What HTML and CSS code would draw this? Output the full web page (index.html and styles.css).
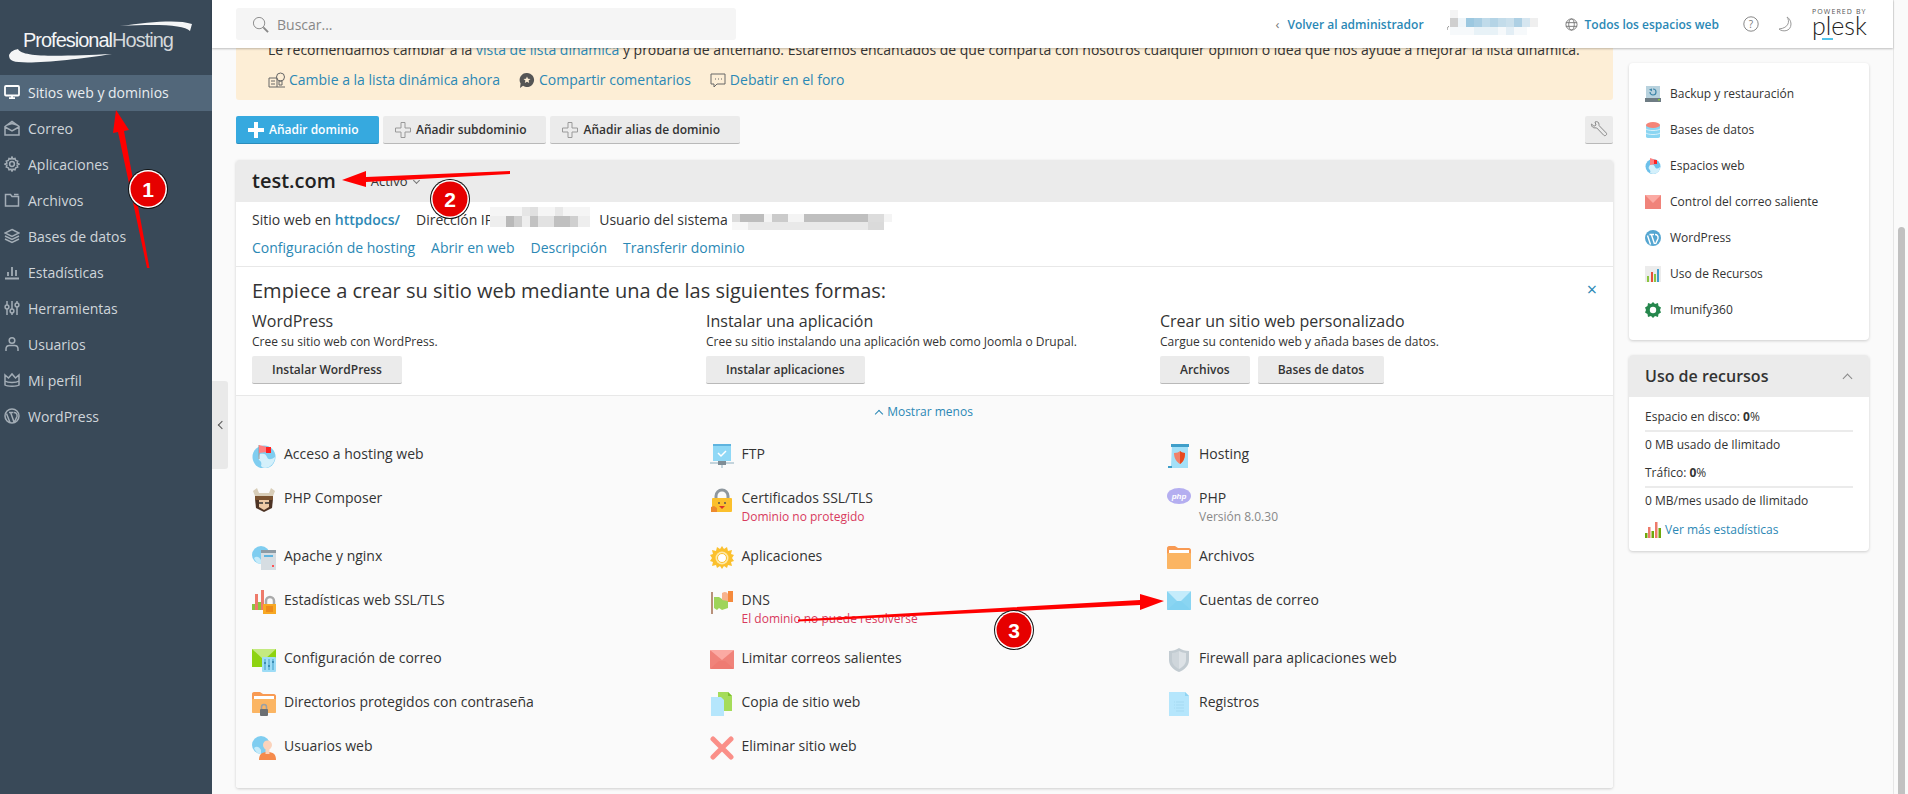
FILE: index.html
```html
<!DOCTYPE html>
<html lang="es">
<head>
  <meta charset="UTF-8" />
  <title>Sitios web y dominios</title>
  <link rel="stylesheet" href="styles.css">
</head>
<body>
  <div class="app">
    <aside class="sidebar">
      <div class="logo">
        <svg viewBox="0 0 212 75" width="212" height="75">
          <path d="M120 26C150 22 178 19 192 24L190 31C184 25 160 24 120 26Z" fill="#f4f5f6"/>
          <path d="M9 55C11 51 14 50 18 49C22 58 62 56 112 54C74 60 24 65 13 61C10 60 9 58 9 55Z" fill="#f4f5f6"/>
          <text x="23" y="47" class="logo-text">Profesional<tspan class="logo-dim">Hosting</tspan></text>
        </svg>
      </div>
      <nav class="menu">
        <a class="menu-item active">
          <svg viewBox="0 0 16 16"><rect x="1" y="2" width="14" height="9.5" rx="1" fill="none" stroke-width="1.8"/><path d="M5 14.2h6M8 12v2" stroke-width="1.8"/></svg>
          Sitios web y dominios
        </a>
        <a class="menu-item">
          <svg viewBox="0 0 16 16"><path d="M1 6.500L8 1.500l7 5V15H1zM1 7l7 4 7-4M3 5l5-1.500L13 5" fill="none"/></svg>
          Correo
        </a>
        <a class="menu-item">
          <svg viewBox="0 0 16 16"><circle cx="8" cy="8" r="2.400" fill="none"/><path d="M8 1l1 2 2-.6.7 2 2 .7-.6 2 1.900 1-1.900 1 .6 2-2 .7-.7 2-2-.6-1 1.900-1-1.900-2 .6-.7-2-2-.7.6-2L1 8.100l1.900-1-.6-2 2-.7.7-2 2 .6z" fill="none"/></svg>
          Aplicaciones
        </a>
        <a class="menu-item">
          <svg viewBox="0 0 16 16"><path d="M1.500 2.500h5l1.500 2h6.500v9.500h-13zM10 2.500h4.500" fill="none"/></svg>
          Archivos
        </a>
        <a class="menu-item">
          <svg viewBox="0 0 16 16"><path d="M8 1.500l7 3.500-7 3.500L1 5zM1 8l7 3.500L15 8M1 11l7 3.500 7-3.500" fill="none"/></svg>
          Bases de datos
        </a>
        <a class="menu-item">
          <svg viewBox="0 0 16 16"><path d="M1 14.500h14M4 12V8M8 12V3M12 12V6" fill="none" stroke-width="1.800"/></svg>
          Estadísticas
        </a>
        <a class="menu-item">
          <svg viewBox="0 0 16 16"><path d="M3 1v4M3 9v6M8 1v8M8 13v2M13 1v2M13 7v8" fill="none"/><circle cx="3" cy="7" r="1.900" fill="none"/><circle cx="8" cy="11" r="1.900" fill="none"/><circle cx="13" cy="5" r="1.900" fill="none"/></svg>
          Herramientas
        </a>
        <a class="menu-item">
          <svg viewBox="0 0 16 16"><circle cx="8" cy="4.500" r="2.800" fill="none"/><path d="M2 15v-2c0-2.500 2-3.500 3.500-3.500h5c1.500 0 3.500 1 3.500 3.500v2" fill="none"/></svg>
          Usuarios
        </a>
        <a class="menu-item">
          <svg viewBox="0 0 16 16"><path d="M1 3l3.500 3L8 2l3.500 4L15 3v10c-2 1.500-12 1.500-14 0zM1 9c3 2 11 2 14 0" fill="none"/></svg>
          Mi perfil
        </a>
        <a class="menu-item">
          <svg viewBox="0 0 16 16"><circle cx="8" cy="8" r="7" fill="none"/><path d="M2.500 5.500l3.500 9M5 4.500h4.500M6.800 5l3.200 9M10 4.500c2 0 3.500 1.500 3 4l-2.500 5.500" fill="none" stroke-width="1.500"/></svg>
          WordPress
        </a>
      </nav>
    </aside>

    <div class="page">
      <header class="topbar">
        <div class="search">
          <svg viewBox="0 0 18 18" width="17" height="17" class="search-icon"><circle cx="7.500" cy="7.500" r="6"/><path d="M12 12l5 5" stroke-width="2"/></svg>
          Buscar...
        </div>
        <div class="top-right">
          <span class="back-chevron">‹</span>
          <a class="top-link back-link">Volver al administrador</a>
          <svg class="user-mosaic" width="92" height="32" viewBox="0 0 92 32">
            <path d="M0 22c0-2 1-3 2-4" stroke="#888" fill="none"/>
            <rect x="3" y="2" width="8" height="8" fill="#f4f4f4"/>
            <rect x="3" y="10" width="8" height="9" fill="#cfcfcf"/>
            <rect x="11" y="10" width="8" height="9" fill="#eef5f9"/>
            <rect x="19" y="10" width="8" height="9" fill="#9cc8e0"/>
            <rect x="27" y="10" width="8" height="9" fill="#a9cee3"/>
            <rect x="35" y="10" width="8" height="9" fill="#c0dbea"/>
            <rect x="43" y="10" width="8" height="9" fill="#b4d4e6"/>
            <rect x="51" y="10" width="8" height="9" fill="#c3dcea"/>
            <rect x="59" y="10" width="8" height="9" fill="#cbe0ec"/>
            <rect x="67" y="10" width="8" height="9" fill="#aed0e4"/>
            <rect x="75" y="10" width="8" height="9" fill="#d6e6f0"/>
            <rect x="83" y="10" width="8" height="9" fill="#efefef"/>
            <rect x="3" y="19" width="77" height="8" fill="#f6f9fb"/>
            <rect x="27" y="19" width="24" height="8" fill="#e8f2f7"/>
            <rect x="59" y="19" width="8" height="8" fill="#e3eef5"/>
          </svg>
          <svg class="globe-icon" viewBox="0 0 14 14" width="13" height="13"><circle cx="7" cy="7" r="6"/><ellipse cx="7" cy="7" rx="3" ry="6"/><path d="M1 5h12M1 9h12"/></svg>
          <a class="top-link">Todos los espacios web</a>
          <svg class="help-icon" viewBox="0 0 16 16" width="16" height="16"><circle cx="8" cy="8" r="7.200"/><text x="8" y="11.500" class="help-mark">?</text></svg>
          <svg class="moon-icon" viewBox="0 0 16 16" width="16" height="16"><path d="M10 1c3 4 2 11-8 12 3 3 12 3 12-5 0-3-2-6-4-7z"/></svg>
          <div class="plesk">
            <span class="plesk-by">POWERED BY</span>
            <span class="plesk-name">plesk</span>
            <span class="plesk-bar"></span>
          </div>
        </div>
      </header>

      <div class="body-row">
        <main class="content">
          <section class="notice">
            <p class="notice-text">Le recomendamos cambiar a la <a>vista de lista dinámica</a> y probarla de antemano. Estaremos encantados de que comparta con nosotros cualquier opinión o idea que nos ayude a mejorar la lista dinámica.</p>
            <div class="notice-links">
              <a>
                <svg viewBox="0 0 18 18" width="18" height="18"><path d="M1 7h8v9H1zM3 10h4M3 13h4" fill="none" stroke="#666"/><circle cx="12.500" cy="6" r="4" fill="none" stroke="#666"/><path d="M11 10h3v4h-3zM9 16h8" fill="none" stroke="#666"/></svg>
                Cambie a la lista dinámica ahora
              </a>
              <a>
                <svg viewBox="0 0 18 18" width="18" height="18"><path d="M9 2a7 7 0 1 1-4 12.700L2 17l.6-4.500A7 7 0 0 1 9 2z" fill="#555"/><path d="M9 5.500l1 2.300 2.500.2-1.900 1.600.6 2.400L9 10.700 6.800 12l.6-2.400L5.500 8l2.500-.2z" fill="#fdeed6"/></svg>
                Compartir comentarios
              </a>
              <a>
                <svg viewBox="0 0 18 18" width="18" height="18"><path d="M2 3h14v10H8l-3 3v-3H2z" fill="none" stroke="#666"/><path d="M6 8h1M9 8h1M12 8h1" stroke="#666"/></svg>
                Debatir en el foro
              </a>
            </div>
          </section>

          <div class="toolbar">
            <button class="btn btn-primary">
              <svg viewBox="0 0 16 16" width="16" height="16"><path d="M6 0h4v6h6v4h-6v6H6v-6H0V6h6z" fill="#fff"/></svg>
              Añadir dominio
            </button>
            <button class="btn">
              <svg viewBox="0 0 16 16" width="16" height="16"><path d="M6 .5h4v5.500h5.500v4H10v5.500H6V10H.5V6H6z" fill="none" stroke="#999"/></svg>
              Añadir subdominio
            </button>
            <button class="btn">
              <svg viewBox="0 0 16 16" width="16" height="16"><path d="M6 .5h4v5.500h5.500v4H10v5.500H6V10H.5V6H6z" fill="none" stroke="#999"/></svg>
              Añadir alias de dominio
            </button>
            <button class="btn btn-tool">
              <svg viewBox="0 0 18 18" width="18" height="18"><path d="M5 1c2-1 4 0 4 2.500 0 .7 0 1 .3 1.300l7 7.200c1.200 1.500-1 3.500-2.500 2.300L6.800 7C6 6.500 4 7.500 2.500 6 1.500 5 1.300 4 1.500 3l2.500 2.300L6 4z" fill="none" stroke="#888"/></svg>
            </button>
          </div>

          <section class="card">
            <div class="card-head">
              <h2 class="domain">test.com</h2>
              <span class="status-dot"></span>
              <span class="status">Activo</span>
              <span class="status-chevron"></span>
            </div>
            <div class="info">
              <div class="info-row">
                <span>Sitio web en <a class="strong-link">httpdocs/</a></span>
                <span class="ip"><span>Dirección IP</span>
                  <svg class="mosaic" width="101" height="20" viewBox="0 0 101 20">
                    <rect width="100" height="9" fill="#f5f5f5"/>
                    <rect x="32" width="8" height="9" fill="#e6e6e6"/>
                    <rect x="40" width="8" height="9" fill="#e0e0e0"/>
                    <rect x="65" width="8" height="9" fill="#e8e8e8"/>
                    <rect y="9" width="100" height="11" fill="#eee"/>
                    <rect x="16" y="9" width="8" height="11" fill="#b9b9b9"/>
                    <rect x="24" y="9" width="8" height="11" fill="#cfcfcf"/>
                    <rect x="40" y="9" width="8" height="11" fill="#c2c2c2"/>
                    <rect x="48" y="9" width="16" height="11" fill="#e2e2e2"/>
                    <rect x="64" y="9" width="16" height="11" fill="#c0c0c0"/>
                    <rect x="80" y="9" width="8" height="11" fill="#cfcfcf"/>
                  </svg>
                </span>
                <span class="sys-user"><span>Usuario del sistema</span>
                  <svg class="mosaic" width="160" height="16" viewBox="0 0 160 16">
                    <rect width="160" height="8" fill="#dcdcdc"/>
                    <rect x="8" width="24" height="8" fill="#bdbdbd"/>
                    <rect x="32" width="8" height="8" fill="#f4f4f4"/>
                    <rect x="40" width="16" height="8" fill="#cbcbcb"/>
                    <rect x="56" width="16" height="8" fill="#f4f4f4"/>
                    <rect x="72" width="64" height="8" fill="#bfbfbf"/>
                    <rect x="152" width="8" height="8" fill="#f4f4f4"/>
                    <rect y="8" width="152" height="8" fill="#e9e9e9"/>
                    <rect y="8" width="16" height="8" fill="#f7f7f7"/>
                    <rect x="136" y="8" width="16" height="8" fill="#dadada"/>
                  </svg>
                </span>
              </div>
              <div class="info-links">
                <a>Configuración de hosting</a>
                <a>Abrir en web</a>
                <a>Descripción</a>
                <a>Transferir dominio</a>
              </div>
            </div>

            <div class="welcome">
              <a class="welcome-close">×</a>
              <h3 class="welcome-title">Empiece a crear su sitio web mediante una de las siguientes formas:</h3>
              <div class="welcome-cols">
                <div class="welcome-col">
                  <h4>WordPress</h4>
                  <p>Cree su sitio web con WordPress.</p>
                  <button class="btn btn-wide">Instalar WordPress</button>
                </div>
                <div class="welcome-col">
                  <h4>Instalar una aplicación</h4>
                  <p>Cree su sitio instalando una aplicación web como Joomla o Drupal.</p>
                  <button class="btn btn-wide">Instalar aplicaciones</button>
                </div>
                <div class="welcome-col">
                  <h4>Crear un sitio web personalizado</h4>
                  <p>Cargue su contenido web y añada bases de datos.</p>
                  <div class="btn-row">
                    <button class="btn btn-wide">Archivos</button>
                    <button class="btn btn-wide">Bases de datos</button>
                  </div>
                </div>
              </div>
            </div>

            <div class="tools">
              <a class="show-less"><span class="up-chevron"></span>Mostrar menos</a>
              <div class="tool-grid">
                <div class="tool">
                  <svg viewBox="0 0 24 24"><circle cx="12" cy="13" r="11.500" fill="#7fcdf0"/><path d="M8 10c4-1 6 0 7 3s4 3 8 0c0 6-5 11-10 11-2 0-3-1-4-2 1-3 0-5-2-6-1-2 0-5 1-6z" fill="#d4f0fb"/><path d="M7 1v14" stroke="#999"/><path d="M7 1l8 2v5l-8 1z" fill="#ff8080"/><rect x="14" y="3" width="5" height="6" fill="#f22"/></svg>
                  <div class="tool-text">Acceso a hosting web</div>
                </div>
                <div class="tool">
                  <svg viewBox="0 0 24 24"><path d="M3 8L1 3l4-3 2 5h10l2-5 4 3-2 5-3 3H6z" fill="#d8cdb8"/><path d="M3 11h18l-1 9-8 4-8-4z" fill="#4d3324"/><rect x="3" y="8" width="18" height="4" fill="#7a5230"/><path d="M7 12h10v7l-5 3-5-3z" fill="#ecc9a5"/><path d="M7 15h4M13 15h4" stroke="#333" stroke-width="1.500"/></svg>
                  <div class="tool-text">PHP Composer</div>
                </div>
                <div class="tool">
                  <svg viewBox="0 0 24 24"><circle cx="9" cy="9" r="9" fill="#7fcdf0"/><path d="M2 12c3-3 6 0 7 2v4c-3 0-6-3-7-6z" fill="#c5ebfa"/><rect x="9" y="4" width="15" height="20" fill="#d6dde2"/><rect x="9" y="4" width="15" height="3" fill="#8e9aa3"/><rect x="12" y="9" width="9" height="2" fill="#5fb4df"/><rect x="20" y="19" width="2" height="2" fill="#f55"/></svg>
                  <div class="tool-text">Apache y nginx</div>
                </div>
                <div class="tool">
                  <svg viewBox="0 0 24 24"><rect y="14" width="3" height="6" fill="#8cc63f"/><rect x="3" y="4" width="3" height="16" fill="#ee7a6a"/><rect x="6" y="12" width="3" height="8" fill="#8cc63f"/><rect x="9" y="0" width="3" height="20" fill="#ee7a6a"/><path d="M14 15v-4a4 4 0 0 1 8 0v4" fill="none" stroke="#aaa" stroke-width="2.500"/><rect x="11" y="14" width="13" height="10" fill="#f7a823"/><path d="M14 17h7M14 19h7M14 21h7" stroke="#e36f12"/></svg>
                  <div class="tool-text">Estadísticas web SSL/TLS</div>
                </div>
                <div class="tool">
                  <svg viewBox="0 0 24 24"><rect y="1" width="24" height="18" fill="#8ed311"/><path d="M0 1h24L12 12z" fill="#c4ea80"/><rect x="10" y="9" width="14" height="15" rx="1" fill="#9ddcf6"/><path d="M13 11v11M17 11v11M21 11v11" stroke="#3f9ec9"/><path d="M12 15h2M16 18h2M20 14h2" stroke="#2e7ea5" stroke-width="1.500"/></svg>
                  <div class="tool-text">Configuración de correo</div>
                </div>
                <div class="tool">
                  <svg viewBox="0 0 24 24"><path d="M0 2c0-1 .5-2 2-2h6l3 2h11c1 0 2 1 2 2v15c0 1-1 2-2 2H2c-1 0-2-1-2-2z" fill="#f89a53"/><rect x="2" y="4" width="20" height="3" fill="#fff"/><rect y="7" width="24" height="14" rx="1" fill="#fbb563"/><path d="M9.500 18v-3a2.500 2.500 0 0 1 5 0v3" fill="none" stroke="#9aa0a6" stroke-width="1.500"/><rect x="8" y="17" width="8" height="7" rx="1" fill="#6b6f73"/></svg>
                  <div class="tool-text">Directorios protegidos con contraseña</div>
                </div>
                <div class="tool">
                  <svg viewBox="0 0 24 24"><circle cx="9" cy="9" r="9" fill="#7fcdf0"/><path d="M2 12c3-3 6 0 7 2v4c-3 0-6-3-7-6z" fill="#c5ebfa"/><circle cx="15.500" cy="9" r="4.500" fill="#fbd3bc"/><path d="M7 24c0-6 3-8 8.500-8s8.500 2 8.500 8z" fill="#f58a4b"/><rect x="13.500" y="12" width="4" height="6" fill="#fbd3bc"/></svg>
                  <div class="tool-text">Usuarios web</div>
                </div>

                <div class="tool">
                  <svg viewBox="0 0 24 24"><rect x="3" y="0" width="18" height="3" fill="#5fb4df"/><rect x="3" y="2" width="18" height="15" fill="#8fd8f6"/><path d="M8 9l3 3 5-5" fill="none" stroke="#fff" stroke-width="1.500"/><rect y="18" width="24" height="2" fill="#c4d4dc"/><rect x="8" y="17" width="8" height="4" fill="#7f8d96"/><rect x="11" y="21" width="2" height="3" fill="#c4d4dc"/></svg>
                  <div class="tool-text">FTP</div>
                </div>
                <div class="tool">
                  <svg viewBox="0 0 24 24"><path d="M6 11V8a6 6 0 0 1 12 0v3" fill="none" stroke="#8e979e" stroke-width="3"/><rect x="2" y="10" width="20" height="14" rx="1" fill="#fbc02d"/><circle cx="9" cy="15" r="1" fill="#555"/><circle cx="15" cy="15" r="1" fill="#555"/><path d="M9 18h6l-3 3z" fill="#d9352b"/><path d="M1 24v-5l3-1 3 2v4z" fill="#ed8a2f"/></svg>
                  <div class="tool-text">Certificados SSL/TLS<span class="tool-sub danger">Dominio no protegido</span></div>
                </div>
                <div class="tool">
                  <svg viewBox="0 0 24 24"><path d="M12 0l2 3 3-2 1 4 4-1-1 4 3 1-2 3 2 3-3 1 1 4-4-1-1 3-3-2-2 3-2-3-3 2-1-3-4 1 1-4-3-1 2-3-2-3 3-1-1-4 4 1 1-4 3 2z" fill="#fbc02d"/><circle cx="12" cy="12" r="6.500" fill="#ffe9a8"/><circle cx="12" cy="12" r="4.500" fill="#fff" stroke="#fbc02d"/></svg>
                  <div class="tool-text">Aplicaciones</div>
                </div>
                <div class="tool">
                  <svg viewBox="0 0 24 24"><rect x="1" y="2" width="2" height="22" fill="#b8917a"/><path d="M4 7h5l3 2 6-2v11l-6 2-3-2-2 2-3-2z" fill="#9ed45a"/><path d="M12 3c3-2 5-1 6 1v7l-6-1z" fill="#f7b28d"/><rect x="18" y="1" width="5" height="11" fill="#f58a3c"/></svg>
                  <div class="tool-text">DNS<span class="tool-sub danger">El dominio no puede resolverse</span></div>
                </div>
                <div class="tool">
                  <svg viewBox="0 0 24 24"><rect y="2" width="24" height="19" rx="1" fill="#f0837a"/><path d="M0 2h24L12 12z" fill="#fbaaa3"/><path d="M0 21l9-8h6l9 8z" fill="#ee7b72"/></svg>
                  <div class="tool-text">Limitar correos salientes</div>
                </div>
                <div class="tool">
                  <svg viewBox="0 0 24 24"><path d="M8 0h10l4 4v15H8z" fill="#a5dc5a"/><path d="M18 0l4 4h-4z" fill="#7cc12c"/><path d="M1 5h10l3 3v16H1z" fill="#b5e6fc"/></svg>
                  <div class="tool-text">Copia de sitio web</div>
                </div>
                <div class="tool">
                  <svg viewBox="0 0 24 24"><path d="M3 3l18 18M21 3L3 21" stroke="#fa8f88" stroke-width="5" stroke-linecap="round"/></svg>
                  <div class="tool-text">Eliminar sitio web</div>
                </div>

                <div class="tool">
                  <svg viewBox="0 0 24 24"><path d="M5 0h16v24H1v-1l3-1z" fill="#a3e0f8"/><rect x="4" y="0" width="18" height="3" fill="#3f9ec9"/><path d="M1 22h4v2H1z" fill="#3f9ec9"/><path d="M7 9c3 0 5-1 6-2 1 1 3 2 5 2 0 6-2 9-5 11-3-2-6-5-6-11z" fill="#f0806a"/><path d="M13 7c1 1 3 2 5 2 0 6-2 9-5 11z" fill="#e8491f"/></svg>
                  <div class="tool-text">Hosting</div>
                </div>
                <div class="tool">
                  <svg viewBox="0 0 24 16" class="php-icon"><ellipse cx="12" cy="8" rx="12" ry="8" fill="#b4aef0"/><text x="12" y="11" class="php-mark">php</text></svg>
                  <div class="tool-text">PHP<span class="tool-sub">Versión 8.0.30</span></div>
                </div>
                <div class="tool">
                  <svg viewBox="0 0 24 24"><path d="M0 2c0-1 1-2 2-2h6l3 2h11c1 0 2 1 2 2v17c0 1-1 2-2 2H2c-1 0-2-1-2-2z" fill="#f89a53"/><rect x="2" y="4" width="20" height="3" fill="#fff"/><rect y="7" width="24" height="16" rx="1" fill="#fbb563"/></svg>
                  <div class="tool-text">Archivos</div>
                </div>
                <div class="tool">
                  <svg viewBox="0 0 24 24"><rect y="1" width="24" height="19" rx="1" fill="#8ad5f2"/><path d="M0 1h24L14 11h-4z" fill="#c5ecfb"/><path d="M0 20l10-9h4l10 9z" fill="#83d2f1"/></svg>
                  <div class="tool-text">Cuentas de correo</div>
                </div>
                <div class="tool">
                  <svg viewBox="0 0 24 24"><path d="M12 0c3 2 6 3 10 3v9c0 6-5 10-10 12C7 22 2 18 2 12V3c4 0 7-1 10-3z" fill="#c2cbd1"/><path d="M12 3c2 1 5 2 7 2v7c0 4-3 7-7 9z" fill="#dde2e6"/><path d="M12 3c-2 1-5 2-7 2v7c0 4 3 7 7 9z" fill="#cfd6db"/></svg>
                  <div class="tool-text">Firewall para aplicaciones web</div>
                </div>
                <div class="tool">
                  <svg viewBox="0 0 24 24"><path d="M2 0h16l4 4v20H2z" fill="#b5e6fc"/><path d="M18 0l4 4h-4z" fill="#90d4f2"/><path d="M9 10h8M9 13h8M9 16h8M9 19h8M7 10h1M7 13h1M7 16h1" stroke="#a5daf2"/></svg>
                  <div class="tool-text">Registros</div>
                </div>
              </div>
            </div>
          </section>
        </main>

        <aside class="side">
          <section class="side-card shortcuts">
            <a class="shortcut">
              <svg viewBox="0 0 16 16"><path d="M1 0h14v12H1z" fill="#b8d2de"/><path d="M8 3a3 3 0 1 1-3 3" fill="none" stroke="#3f86a8" stroke-width="1.200"/><path d="M4 3.500l3-1v3z" fill="#3f86a8"/><rect y="12" width="16" height="4" fill="#6e7c84"/><rect x="13" y="13" width="2" height="1.500" fill="#8cc63f"/></svg>
              Backup y restauración
            </a>
            <a class="shortcut">
              <svg viewBox="0 0 16 16"><rect x="1" y="3" width="14" height="12" fill="#8ad5f2"/><ellipse cx="8" cy="3" rx="7" ry="3" fill="#f58478"/><path d="M1 7c2 2 12 2 14 0M1 11c2 2 12 2 14 0" fill="none" stroke="#d8f1fb"/><ellipse cx="8" cy="15" rx="7" ry="1.500" fill="#8ad5f2"/></svg>
              Bases de datos
            </a>
            <a class="shortcut">
              <svg viewBox="0 0 16 16"><circle cx="8" cy="8.500" r="7.500" fill="#6cc0ea"/><path d="M5 7c3-1 4 0 5 2s3 2 5 0c0 4-3 7-7 7-1 0-2-1-3-1 1-2 0-3-1-4-1-1 0-3 1-4z" fill="#d4f0fb"/><path d="M5 0l6 2v4l-6 1z" fill="#ff8080"/><rect x="9" y="2" width="3" height="4" fill="#f22"/></svg>
              Espacios web
            </a>
            <a class="shortcut">
              <svg viewBox="0 0 16 16"><rect y="1" width="16" height="14" fill="#f0837a"/><path d="M0 1h16L8 9z" fill="#fbaaa3"/></svg>
              Control del correo saliente
            </a>
            <a class="shortcut">
              <svg viewBox="0 0 16 16"><circle cx="8" cy="8" r="8" fill="#55a6d1"/><path d="M2.500 5.500l3 9M4.500 4.500h4.500M6.500 5l3 9M10 4.500c2 0 3.500 1.500 3 4l-2.500 5.500" fill="none" stroke="#fff" stroke-width="1.400"/></svg>
              WordPress
            </a>
            <a class="shortcut">
              <svg viewBox="0 0 16 16"><rect width="16" height="16" fill="#ececec"/><rect x="2" y="10" width="2" height="6" fill="#8cc63f"/><rect x="6" y="6" width="2" height="10" fill="#e8503a"/><rect x="9" y="8" width="2" height="8" fill="#8cc63f"/><rect x="12" y="3" width="2" height="13" fill="#3f9ec9"/></svg>
              Uso de Recursos
            </a>
            <a class="shortcut">
              <svg viewBox="0 0 16 16"><path d="M8 0l2 2 3-1 .5 3L16 5.500 15 8l1 2.500L13.500 12l-.5 3-3-1-2 2-2-2-3 1-.5-3L0 10.500 1 8 0 5.500 2.500 4 3 1l3 1z" fill="#25874d"/><circle cx="8" cy="8" r="3.200" fill="#fff"/></svg>
              Imunify360
            </a>
          </section>

          <section class="side-card usage">
            <div class="usage-head">
              <h3>Uso de recursos</h3>
              <span class="usage-chevron"></span>
            </div>
            <div class="usage-body">
              <div class="usage-label">Espacio en disco: <b>0</b>%</div>
              <div class="usage-bar"></div>
              <div class="usage-value">0 MB usado de Ilimitado</div>
              <div class="usage-label usage-next">Tráfico: <b>0</b>%</div>
              <div class="usage-bar"></div>
              <div class="usage-value">0 MB/mes usado de Ilimitado</div>
              <a class="usage-more">
                <svg viewBox="0 0 16 16" width="16" height="16"><rect y="11" width="2.500" height="5" fill="#6fa70c"/><rect x="3" y="5" width="2.500" height="11" fill="#ee7a6a"/><rect x="6.500" y="9" width="2.500" height="7" fill="#6fa70c"/><rect x="10" y="0" width="2.500" height="16" fill="#ee7a6a"/><rect x="13.500" y="6" width="2.500" height="10" fill="#6fa70c"/></svg>
                Ver más estadísticas
              </a>
            </div>
          </section>
        </aside>
      </div>

      <div class="collapse"><span class="collapse-chevron"></span></div>
    </div>

    <div class="scrollbar"><div class="scroll-thumb"></div></div>
  </div>

  <svg class="marks" width="1908" height="794" viewBox="0 0 1908 794">
    <path d="M147 268L149.500 268L124 131L129 130L116 110L113 133L118 132Z"/>
    <path d="M510 171L510 174L366 182L366 187L342 180L366 171L366 177Z"/>
    <path d="M798 619.500L798 621.500L1140 605L1140 610L1164 601L1140 594L1140 600Z"/>
    <g>
      <circle cx="148" cy="189" r="20" class="ring-out"/><circle cx="148" cy="189" r="19" class="ring-in"/><circle cx="148" cy="189" r="17.500"/>
      <text x="148" y="196.500">1</text>
    </g>
    <g>
      <circle cx="450" cy="199" r="20" class="ring-out"/><circle cx="450" cy="199" r="19" class="ring-in"/><circle cx="450" cy="199" r="17.500"/>
      <text x="450" y="206.500">2</text>
    </g>
    <g>
      <circle cx="1014" cy="630" r="20" class="ring-out"/><circle cx="1014" cy="630" r="19" class="ring-in"/><circle cx="1014" cy="630" r="17.500"/>
      <text x="1014" y="637.500">3</text>
    </g>
  </svg>
</body>
</html>
```

FILE: styles.css
```css
* {
  box-sizing: border-box;
}
html, body {
  margin: 0;
  height: 100%;
  overflow: hidden;
}
body {
  font-family: "Open Sans", sans-serif;
  font-size: 13px;
  color: #333;
  background: #fafafa;
}
a {
  color: #2b88b5;
  text-decoration: none;
}
h2, h3, h4, p {
  margin: 0;
  font-weight: 400;
}
.app {
  display: flex;
  height: 794px;
  overflow: hidden;
}

/* left menu */
.sidebar {
  width: 212px;
  flex: none;
  background: #394958;
}
.logo {
  height: 75px;
}
.logo svg {
  display: block;
}
.logo-text {
  font-family: "Liberation Sans", sans-serif;
  font-size: 20px;
  letter-spacing: -1px;
  fill: #f4f5f6;
}
.logo-dim {
  fill: #d4d8db;
}
.menu-item {
  display: flex;
  align-items: center;
  gap: 8px;
  height: 36px;
  padding: 0 0 2px 4px;
  font-size: 14px;
  color: #cfd5da;
}
.menu-item svg {
  width: 16px;
  height: 16px;
  stroke: #a3adb6;
  stroke-width: 1.500;
}
.menu-item.active {
  background: #52677a;
  color: #e9edf0;
}
.menu-item.active svg {
  stroke: #fff;
}

/* top bar */
.page {
  flex: 1;
  min-width: 0;
  display: flex;
  flex-direction: column;
  position: relative;
}
.topbar {
  height: 48px;
  flex: none;
  display: flex;
  align-items: center;
  padding: 0 23px 0 24px;
  background: #fff;
  box-shadow: 0 1px 2px rgba(0, 0, 0, 0.25);
  position: relative;
  z-index: 2;
}
.search {
  width: 500px;
  height: 32px;
  display: flex;
  align-items: center;
  gap: 8px;
  padding-left: 16px;
  background: #f5f5f5;
  border-radius: 3px;
  font-size: 14px;
  color: #888;
}
.search-icon {
  fill: none;
  stroke: #888;
}
.top-right {
  margin-left: auto;
  display: flex;
  align-items: center;
}
.back-chevron {
  color: #777;
  font-size: 13px;
  margin-right: 8px;
}
.top-link {
  font-size: 12px;
  font-weight: 600;
}
.user-mosaic {
  margin: 0 26px 0 23px;
}
.globe-icon {
  fill: none;
  stroke: #777;
  margin-right: 7px;
}
.help-icon {
  margin-left: 24px;
  fill: none;
  stroke: #888;
}
.help-mark {
  font-size: 10px;
  text-anchor: middle;
  fill: #777;
  stroke: none;
}
.moon-icon {
  margin: 0 18px;
  fill: #fff;
  stroke: #999;
}
.plesk {
  width: 59px;
  height: 40px;
  display: flex;
  flex-direction: column;
  position: relative;
  padding: 3px 0 0 1px;
}
.plesk-by {
  font-size: 7px;
  letter-spacing: 1.100px;
  line-height: 9px;
  white-space: nowrap;
  color: #555;
}
.plesk-name {
  font-family: "Lato", sans-serif;
  font-weight: 300;
  font-size: 25px;
  line-height: 18px;
  color: #222;
}
.plesk-bar {
  position: absolute;
  left: 11px;
  bottom: 4px;
  width: 11px;
  height: 2px;
  background: #4fc3ea;
}

/* page body */
.body-row {
  flex: 1;
  min-height: 0;
  display: flex;
  gap: 16px;
  padding: 0 24px;
}
.content {
  flex: 1;
  min-width: 0;
  margin-top: -8px;
}
.notice {
  background: #fdeed6;
  padding: 0 32px 10px;
  border-radius: 0 0 3px 3px;
  height: 60px;
}
.notice-text {
  font-size: 14px;
  line-height: 20px;
  white-space: nowrap;
}
.notice-links {
  display: flex;
  gap: 18px;
  margin-top: 10px;
  font-size: 14px;
  line-height: 20px;
}
.notice-links a {
  display: flex;
  align-items: center;
  gap: 3px;
}

/* buttons */
.toolbar {
  display: flex;
  gap: 4px;
  margin: 16px 0;
}
.btn {
  height: 28px;
  display: inline-flex;
  align-items: center;
  gap: 5px;
  padding: 0 20px 0 12px;
  border: 0;
  border-bottom: 1px solid #b9b9b9;
  border-radius: 2px;
  background: #ebebeb;
  font: 600 12px "Open Sans", sans-serif;
  color: #333;
  white-space: nowrap;
}
.btn-primary {
  background: #36a9df;
  border-bottom-color: #2b8dbc;
  color: #fff;
  width: 143px;
}
.btn-tool {
  width: 28px;
  padding: 0 5px;
  margin-left: auto;
}
.btn-wide {
  padding: 0 20px;
}

/* domain card */
.card {
  background: #fff;
  border-radius: 3px;
  box-shadow: 0 1px 3px rgba(0, 0, 0, 0.18);
}
.card-head {
  height: 42px;
  display: flex;
  align-items: center;
  padding: 0 0 2px 16px;
  background: #ebebeb;
  border-radius: 3px 3px 0 0;
}
.domain {
  font-size: 20px;
  font-weight: 600;
  color: #222;
}
.status-dot {
  width: 8px;
  height: 8px;
  border-radius: 50%;
  background: #6bb42a;
  margin: 2px 5px 0 22px;
}
.status {
  font-size: 13px;
  padding-top: 2px;
}
.status-chevron {
  width: 5px;
  height: 5px;
  margin-left: 7px;
  border-right: 1px solid #777;
  border-bottom: 1px solid #777;
  transform: rotate(45deg);
}
.info {
  padding: 8px 16px;
  border-bottom: 1px solid #e8e8e8;
  line-height: 20px;
  font-size: 14px;
}
.info-row {
  display: flex;
  align-items: center;
  height: 20px;
  gap: 16px;
}
.ip, .sys-user {
  display: flex;
  align-items: center;
}
.ip {
  margin-right: -8px;
}
.strong-link {
  font-weight: 600;
}
.mosaic {
  display: block;
  flex: none;
}
.ip .mosaic {
  margin: 0 0 6px -3px;
}
.sys-user .mosaic {
  margin: 4px 0 0 4px;
}
.info-links {
  display: flex;
  gap: 16px;
  margin-top: 8px;
}
.welcome {
  height: 129px;
  padding: 12px 16px 0;
  border-bottom: 1px solid #e8e8e8;
  position: relative;
}
.welcome-close {
  position: absolute;
  top: 11px;
  right: 16px;
  font-size: 18px;
  line-height: 22px;
}
.welcome-title {
  font-size: 20px;
  line-height: 24px;
  color: #333;
}
.welcome-cols {
  display: grid;
  grid-template-columns: repeat(3, 454px);
  margin-top: 7px;
}
.welcome-col h4 {
  font-size: 16px;
  line-height: 22px;
  margin-bottom: 1px;
}
.welcome-col p {
  font-size: 12px;
  line-height: 18px;
  margin-bottom: 5px;
}
.btn-row {
  display: flex;
  gap: 8px;
}

/* tool list */
.tools {
  background: #fafafa;
  padding: 8px 16px 28px;
  border-radius: 0 0 3px 3px;
}
.show-less {
  display: flex;
  justify-content: center;
  align-items: center;
  gap: 5px;
  font-size: 12px;
  line-height: 16px;
  margin-bottom: 24px;
}
.up-chevron {
  width: 6px;
  height: 6px;
  margin-top: 3px;
  border-left: 1px solid #2b88b5;
  border-top: 1px solid #2b88b5;
  transform: rotate(45deg);
}
.tool-grid {
  display: grid;
  grid-auto-flow: column;
  grid-template-rows: 24px 38px 24px 38px 24px 24px 24px;
  grid-template-columns: repeat(3, 457.500px);
  row-gap: 20px;
}
.tool {
  display: flex;
  gap: 8px;
}
.tool svg {
  width: 24px;
  height: 24px;
  flex: none;
}
.tool svg.php-icon {
  height: 16px;
}
.php-mark {
  font: italic 700 8px "Liberation Sans", sans-serif;
  fill: #fff;
  text-anchor: middle;
}
.tool-text {
  font-size: 14px;
  line-height: 20px;
}
.tool-sub {
  display: block;
  font-size: 12px;
  line-height: 18px;
  color: #888;
}
.tool-sub.danger {
  color: #d83a5e;
}

/* right column */
.side {
  width: 240px;
  flex: none;
  padding-top: 15px;
}
.side-card {
  background: #fff;
  border-radius: 4px;
  box-shadow: 0 1px 3px rgba(0, 0, 0, 0.18);
}
.shortcuts {
  padding: 13px 16px 12px;
  margin-bottom: 15px;
}
.shortcut {
  display: flex;
  align-items: center;
  gap: 9px;
  height: 36px;
  padding-bottom: 1px;
  font-size: 12px;
  color: #333;
}
.shortcut svg {
  width: 16px;
  height: 16px;
  flex: none;
}
.usage-head {
  height: 42px;
  display: flex;
  align-items: center;
  justify-content: space-between;
  padding: 0 16px;
  background: #ebebeb;
  border-radius: 4px 4px 0 0;
}
.usage-head h3 {
  font-size: 16px;
  font-weight: 600;
  color: #333;
}
.usage-chevron {
  width: 7px;
  height: 7px;
  margin: 4px 2px 0 0;
  border-left: 1px solid #888;
  border-top: 1px solid #888;
  transform: rotate(45deg);
}
.usage-body {
  padding: 10px 16px 11px;
  font-size: 12px;
  line-height: 20px;
}
.usage-bar {
  height: 2px;
  margin: 3px 0;
  background: #ebebeb;
}
.usage-next {
  margin-top: 8px;
}
.usage-more {
  display: flex;
  gap: 4px;
  align-items: center;
  margin-top: 9px;
}

/* sidebar toggle, over the page */
.collapse {
  position: absolute;
  left: 0;
  top: 381px;
  width: 16px;
  height: 88px;
  display: flex;
  align-items: center;
  justify-content: center;
  background: #e9e9e9;
  border-radius: 0 3px 3px 0;
}
.collapse-chevron {
  width: 6px;
  height: 6px;
  margin-left: 3px;
  border-left: 1px solid #555;
  border-bottom: 1px solid #555;
  transform: rotate(45deg);
}

.scrollbar {
  width: 15px;
  flex: none;
  background: #fafafa;
  border-left: 1px solid #e6e6e6;
  padding: 227px 0 0 4px;
}
.scroll-thumb {
  width: 7px;
  height: 567px;
  background: #c1c1c1;
  border-radius: 4px 4px 0 0;
}

/* red annotations drawn on top of the screenshot */
.marks {
  position: absolute;
  left: 0;
  top: 0;
  z-index: 5;
  fill: #f00;
  pointer-events: none;
}
.marks g circle {
  fill: #e60000;
}
.marks g circle.ring-out {
  fill: #111;
}
.marks g circle.ring-in {
  fill: #fff;
}
.marks text {
  font: 700 21px "Liberation Sans", sans-serif;
  fill: #fff;
  text-anchor: middle;
}
```
